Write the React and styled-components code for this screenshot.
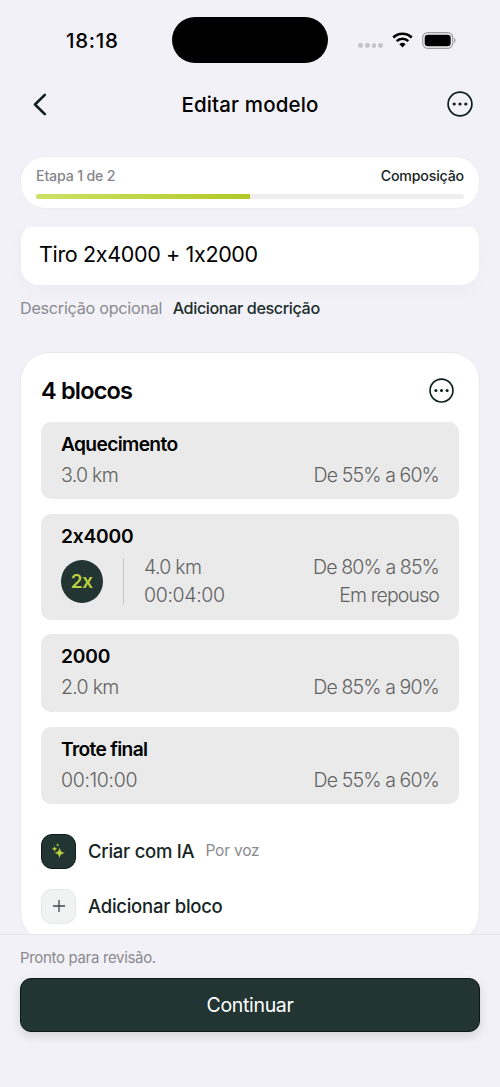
import React from 'react';
import styled, { createGlobalStyle } from 'styled-components';

const blocks = [
   { id: 1, name: 'Aquecimento', rows: [['3.0 km', 'De 55% a 60%']] },
   {
      id: 2,
      name: '2x4000',
      repeat: '2x',
      rows: [['4.0 km', 'De 80% a 85%'], ['00:04:00', 'Em repouso']],
   },
   { id: 3, name: '2000', rows: [['2.0 km', 'De 85% a 90%']] },
   { id: 4, name: 'Trote final', rows: [['00:10:00', 'De 55% a 60%']] },
];

function MoreIcon({ size }) {
   return (
      <svg width={size} height={size} viewBox="0 0 26 26">
         <circle cx="13" cy="13" r="11.9" fill="none" stroke="#0f1f1e" strokeWidth="1.7" />
         <circle cx="7.2" cy="13" r="1.6" fill="#0f1f1e" />
         <circle cx="13" cy="13" r="1.6" fill="#0f1f1e" />
         <circle cx="18.8" cy="13" r="1.6" fill="#0f1f1e" />
      </svg>
   );
}

function WifiIcon() {
   return (
      <svg width="21" height="16" viewBox="0 0 21 16">
         <g fill="none" stroke="#000" strokeWidth="2.7">
            <path d="M1.3 5.5a13.2 13.2 0 0 1 18.4 0" />
            <path d="M4.7 9.1a8.3 8.3 0 0 1 11.6 0" />
         </g>
         <path d="M10.5 15.4 7.4 12.2a4.5 4.5 0 0 1 6.2 0z" fill="#000" />
      </svg>
   );
}

function BatteryIcon() {
   return (
      <svg width="35" height="17" viewBox="0 0 35 17">
         <rect x="0.7" y="0.7" width="30" height="15.6" rx="5" fill="none" stroke="#9c9ca0" strokeWidth="1.2" />
         <rect x="2.7" y="2.7" width="26" height="11.6" rx="3.2" fill="#000" />
         <path d="M32.2 5.8c1.8.7 1.8 4.7 0 5.4z" fill="#9c9ca0" />
      </svg>
   );
}

function SparklesIcon() {
   return (
      <svg width="15" height="17" viewBox="0 0 15 17" fill="#b9d03c">
         <path d="M8.6 4.6c.8 3.6 1.6 4.5 5.2 5.3-3.6.8-4.4 1.7-5.2 5.3-.8-3.6-1.6-4.5-5.2-5.3 3.6-.8 4.4-1.7 5.2-5.3z" />
         <path d="M3.6 2.9c.5 1.9 1 2.4 2.9 2.9-1.9.5-2.4 1-2.9 2.9-.5-1.9-1-2.4-2.9-2.9 1.9-.5 2.4-1 2.9-2.9z" />
         <path d="M6.7.3c.3 1.1.6 1.4 1.7 1.7-1.1.3-1.4.6-1.7 1.7-.3-1.1-.6-1.4-1.7-1.7 1.1-.3 1.4-.6 1.7-1.7z" />
      </svg>
   );
}

function Block({ block }) {
   return (
      <BlockCard>
         <BlockName $numeric={/^\d/.test(block.name)}>{block.name}</BlockName>
         <BlockBody>
            {block.repeat && (
               <>
                  <RepeatBadge>{block.repeat}</RepeatBadge>
                  <Divider />
               </>
            )}
            <BlockRows>
               {block.rows.map(([left, right]) => (
                  <BlockRow key={left}>
                     <Amount $time={left.includes(':')}>{left}</Amount>
                     <Zone>{right}</Zone>
                  </BlockRow>
               ))}
            </BlockRows>
         </BlockBody>
      </BlockCard>
   );
}

function App() {
   return (
      <Screen>
         <GlobalStyle />
         <StatusBar>
            <Clock>18:18</Clock>
            <Island />
            <StatusIcons>
               <Dots>
                  <i />
                  <i />
                  <i />
                  <i />
               </Dots>
               <WifiIcon />
               <BatteryIcon />
            </StatusIcons>
         </StatusBar>

         <Header>
            <HeaderButton aria-label="Voltar">
               <svg width="14" height="23" viewBox="0 0 14 23" fill="none">
                  <path d="M11.8 1.8 2 11.5l9.8 9.7" stroke="#0f1f1e" strokeWidth="2.6" strokeLinecap="round" strokeLinejoin="round" />
               </svg>
            </HeaderButton>
            <HeaderTitle>Editar modelo</HeaderTitle>
            <HeaderButton aria-label="Mais">
               <MoreIcon size={26} />
            </HeaderButton>
         </Header>

         <StepCard>
            <StepLabels>
               <StepCount>Etapa 1 de 2</StepCount>
               <StepName>Composição</StepName>
            </StepLabels>
            <Track>
               <Progress />
            </Track>
         </StepCard>

         <Content>
            <NameField>Tiro 2x4000 + 1x2000</NameField>
            <DescriptionRow>
               <Hint>Descrição opcional</Hint>
               <LinkButton>Adicionar descrição</LinkButton>
            </DescriptionRow>

            <BlocksCard>
               <BlocksHeader>
                  <BlocksTitle>4 blocos</BlocksTitle>
                  <MoreIcon size={25} />
               </BlocksHeader>
               <BlockList>
                  {blocks.map((block) => (
                     <Block key={block.id} block={block} />
                  ))}
               </BlockList>
               <Actions>
                  <Action>
                     <ActionIcon $dark>
                        <SparklesIcon />
                     </ActionIcon>
                     <ActionLabel>Criar com IA</ActionLabel>
                     <ActionNote>Por voz</ActionNote>
                  </Action>
                  <Action>
                     <ActionIcon>
                        <svg width="12" height="12" viewBox="0 0 12 12">
                           <path d="M6 0v12M0 6h12" stroke="#3c4d4b" strokeWidth="1.3" />
                        </svg>
                     </ActionIcon>
                     <ActionLabel>Adicionar bloco</ActionLabel>
                  </Action>
               </Actions>
            </BlocksCard>
         </Content>

         <Footer>
            <FooterNote>Pronto para revisão.</FooterNote>
            <ContinueButton>Continuar</ContinueButton>
         </Footer>
      </Screen>
   );
}

export default App;

const GlobalStyle = createGlobalStyle`
   * {
      box-sizing: border-box;
   }
   body {
      margin: 0;
      background: #f2f1f7;
   }
   button {
      padding: 0;
      border: none;
      background: none;
      font-family: inherit;
      font-feature-settings: inherit;
   }
   svg {
      display: block;
      flex-shrink: 0;
   }
`;

/* calt is off so that Inter keeps the x in "2x4000" as a letter */
const Screen = styled.div`
   display: flex;
   flex-direction: column;
   width: 500px;
   height: 1087px;
   overflow: hidden;
   background: #f2f1f7;
   color: #000;
   font-family: Inter, 'Liberation Sans', sans-serif;
   font-feature-settings: 'calt' 0;
   white-space: nowrap;
`;

const StatusBar = styled.div`
   display: grid;
   grid-template-columns: 172px 156px 172px;
   align-items: center;
   height: 80px;
   flex-shrink: 0;
`;

const Clock = styled.div`
   padding: 1px 0 0 66px;
   font-size: 20.5px;
   font-weight: 500;
   letter-spacing: 0.7px;
`;

const Island = styled.div`
   height: 46px;
   border-radius: 23px;
   background: #000;
`;

const StatusIcons = styled.div`
   display: flex;
   align-items: center;
   padding-left: 30px;

   > svg:nth-child(2) {
      margin: 0 9px;
   }
`;

const Dots = styled.div`
   display: flex;
   gap: 2px;
   margin-top: 11px;

   > i {
      width: 4.8px;
      height: 4.8px;
      border-radius: 50%;
      background: #c3c3c8;
   }
`;

const Header = styled.div`
   display: flex;
   align-items: center;
   justify-content: space-between;
   height: 48px;
   padding: 0 27px 0 33px;
   flex-shrink: 0;
`;

const HeaderButton = styled.button`
   display: flex;
   width: 26px;
`;

const HeaderTitle = styled.div`
   margin-right: 6px;
   font-size: 20.5px;
   font-weight: 500;
   letter-spacing: 0.15px;
`;

const StepCard = styled.div`
   height: 53px;
   margin: 28px 20px 18px;
   padding: 10px 15px;
   border: 1px solid #ececf0;
   border-radius: 25px;
   background: #fff;
   flex-shrink: 0;
`;

const StepLabels = styled.div`
   display: flex;
   justify-content: space-between;
   font-size: 14.2px;
   font-weight: 500;
   line-height: 18px;
   letter-spacing: -0.18px;
`;

const StepCount = styled.span`
   color: #85858a;
`;

const StepName = styled.span`
   color: #152524;
`;

const Track = styled.div`
   height: 5px;
   margin-top: 9px;
   border-radius: 3px;
   background: #eeeeee;
   overflow: hidden;
`;

const Progress = styled.div`
   width: 50%;
   height: 100%;
   background: linear-gradient(90deg, #cde265, #b1c926);
`;

const Content = styled.div`
   flex: 1;
   min-height: 0;
   padding: 0 20px;
   overflow: hidden;
`;

const NameField = styled.div`
   height: 62px;
   margin: -4px 1px 0;
   padding: 0 18px;
   border-radius: 18px;
   background: #fff;
   box-shadow: 0 4px 16px rgba(30, 30, 60, 0.03);
   font-size: 21.5px;
   line-height: 62px;
   letter-spacing: -0.35px;
`;

const DescriptionRow = styled.div`
   display: flex;
   gap: 10.5px;
   margin-top: 13px;
   font-size: 16.2px;
   line-height: 20px;
   letter-spacing: -0.27px;
`;

const Hint = styled.span`
   color: #8a8a8e;
`;

const LinkButton = styled.button`
   color: #1b2e2c;
   font-size: inherit;
   font-weight: 500;
   line-height: inherit;
   letter-spacing: -0.4px;
`;

const BlocksCard = styled.div`
   height: 590px;
   margin-top: 34px;
   padding: 0 20px;
   border: 1px solid #e9e9ed;
   border-radius: 29px;
   background: #fff;
`;

const BlocksHeader = styled.div`
   display: flex;
   align-items: center;
   justify-content: space-between;
   height: 74px;
   padding: 3px 5px 3px 0;
`;

const BlocksTitle = styled.div`
   font-size: 23.5px;
   font-weight: 600;
   letter-spacing: -0.8px;
`;

const BlockList = styled.div`
   display: flex;
   flex-direction: column;
   gap: 14.8px;
   margin-top: -5px;
`;

const BlockCard = styled.div`
   padding: 9px 20px 10px;
   border-radius: 10px;
   background: #eaeaea;
`;

const BlockName = styled.div`
   font-size: 19.2px;
   font-weight: 600;
   line-height: 26px;
   letter-spacing: ${(props) => (props.$numeric ? '-0.2px' : '-0.65px')};
`;

const BlockBody = styled.div`
   display: flex;
   align-items: center;
   margin-top: 4px;
`;

const BlockRows = styled.div`
   flex: 1;
`;

const BlockRow = styled.div`
   display: flex;
   justify-content: space-between;
   color: #626262;
   font-size: 19.5px;
   font-weight: 300;
   line-height: 28.3px;
`;

const Amount = styled.span`
   letter-spacing: ${(props) => (props.$time ? '-0.35px' : '-0.7px')};
`;

const Zone = styled.span`
   letter-spacing: -0.88px;
`;

const RepeatBadge = styled.div`
   display: flex;
   align-items: center;
   justify-content: center;
   width: 41.5px;
   height: 43px;
   border-radius: 50%;
   background: #223533;
   color: #b9d03c;
   font-size: 19px;
   font-weight: 600;
   letter-spacing: -0.3px;
`;

const Divider = styled.div`
   width: 1.5px;
   height: 47px;
   margin: 0 20px;
   background: #c6c6c6;
`;

const Actions = styled.div`
   display: flex;
   flex-direction: column;
   gap: 20px;
   margin-top: 30px;
`;

const Action = styled.div`
   display: flex;
   align-items: center;
   height: 35px;
`;

const ActionIcon = styled.div`
   display: flex;
   align-items: center;
   justify-content: center;
   width: 35px;
   height: 35px;
   margin-right: 12px;
   border: 1px solid ${(props) => (props.$dark ? '#0e1c1b' : '#e4e7e7')};
   border-radius: 11px;
   background: ${(props) => (props.$dark ? '#223533' : '#f1f3f3')};
`;

const ActionLabel = styled.div`
   margin-top: -1px;
   color: #152524;
   font-size: 18.5px;
   font-weight: 500;
   letter-spacing: -0.26px;
`;

const ActionNote = styled.div`
   margin: -1px 0 0 11px;
   color: #8a8a8e;
   font-size: 15.5px;
   letter-spacing: -0.2px;
`;

const Footer = styled.div`
   height: 153px;
   padding: 13px 20px 0;
   border-top: 1px solid #e6e6ea;
   flex-shrink: 0;
`;

const FooterNote = styled.div`
   color: #8a8a8e;
   font-size: 15px;
   line-height: 20px;
   letter-spacing: -0.33px;
`;

const ContinueButton = styled.button`
   width: 100%;
   height: 54px;
   margin-top: 10px;
   border: 1px solid #0b1716;
   border-radius: 11px;
   background: #223533;
   box-shadow: 0 4px 10px rgba(20, 30, 40, 0.14);
   color: #fff;
   font-size: 19.5px;
   font-weight: 400;
   letter-spacing: -0.33px;
`;
